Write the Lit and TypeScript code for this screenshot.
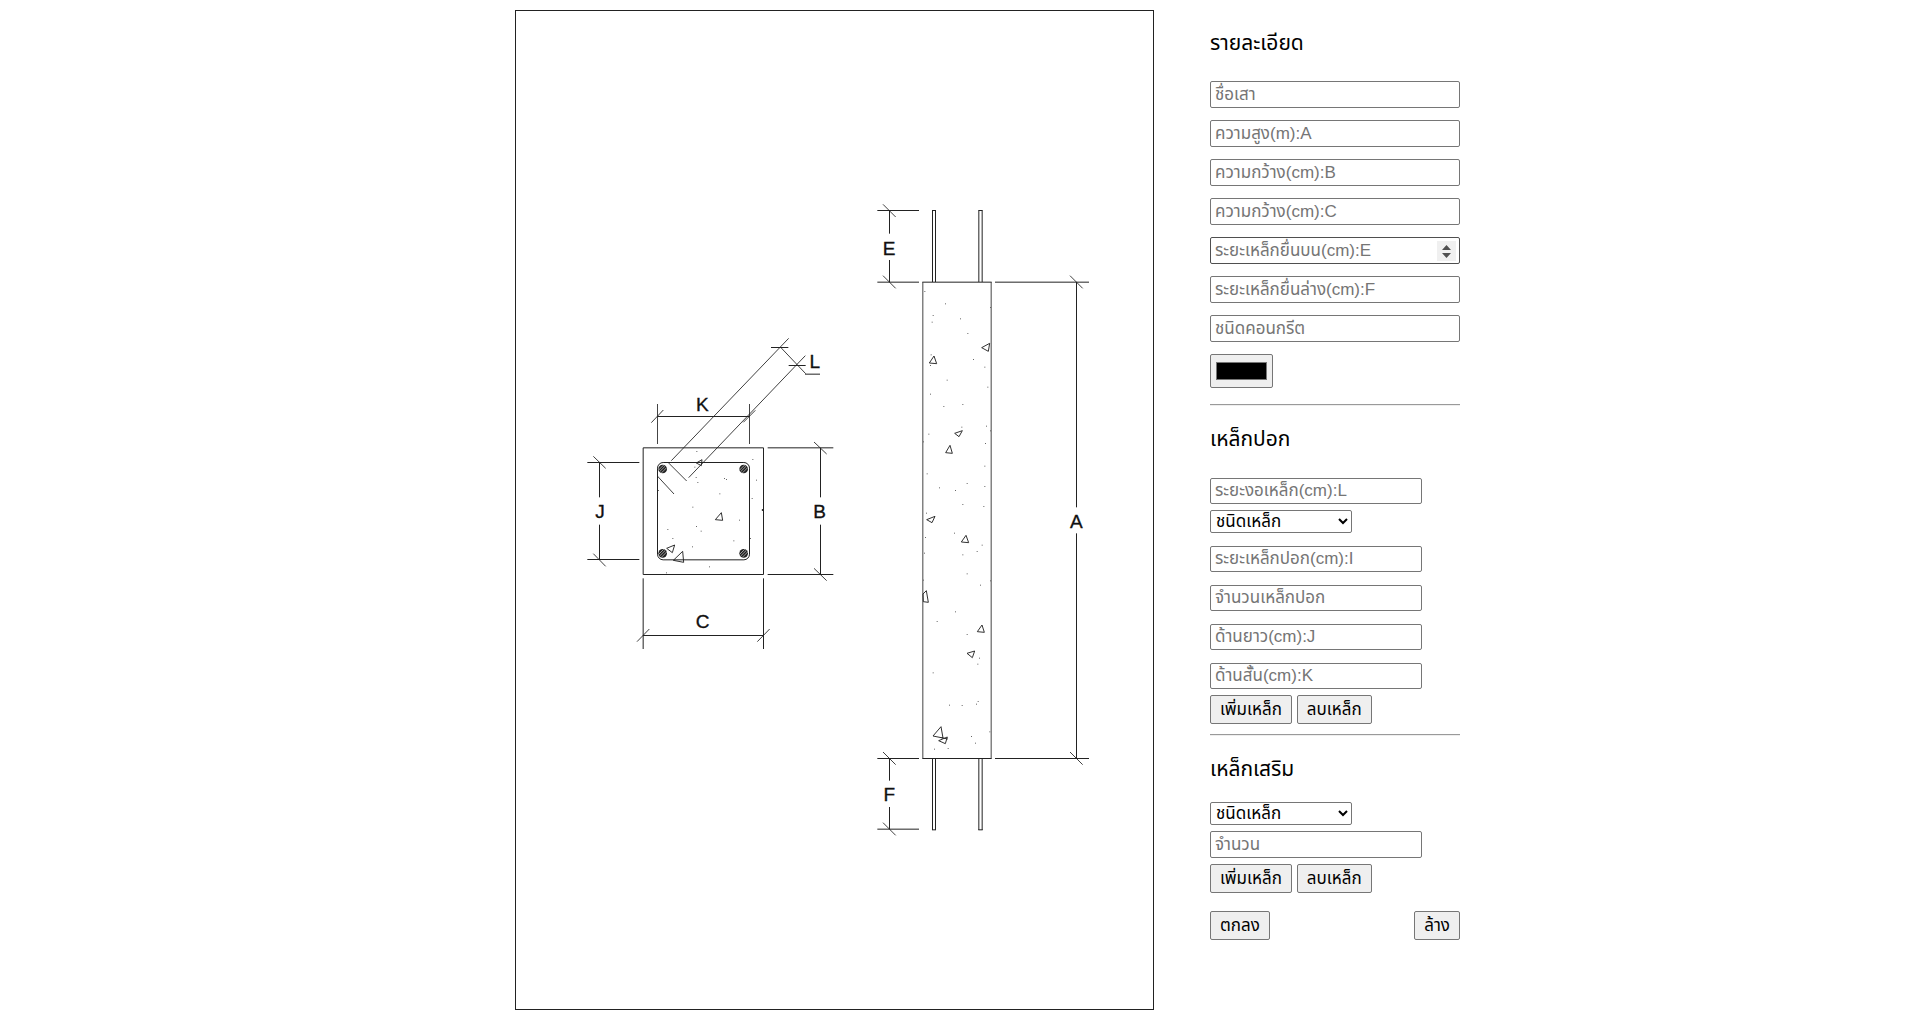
import { LitElement, html, svg, css } from "lit";
import { customElement } from "lit/decorators.js";

type Point = [number, number];

// The drawing uses three units for each pixel; every group has its own origin.
const sectionDots: Point[] = [
  [380, 394], [548, 418], [374, 441], [378, 472], [383, 487], [463, 475], [469, 478],
  [559, 480], [265, 511], [449, 521], [546, 535], [368, 561], [508, 600], [379, 619],
  [393, 633], [293, 628], [308, 655], [541, 655], [491, 662], [367, 680], [418, 740], [289, 758],
];
const upperDots: Point[] = [
  [194, 304], [256, 341], [219, 376], [216, 396], [301, 386], [323, 430], [391, 352],
  [213, 494], [211, 526], [340, 508], [374, 531], [261, 570], [383, 591], [211, 612], [251, 649], [308, 643],
];
const middleDots: Point[] = [
  [305, 51], [379, 48], [391, 62], [206, 72], [190, 95], [376, 100], [374, 168], [201, 191],
  [321, 220], [374, 229], [238, 233], [286, 241], [308, 283], [371, 289], [199, 309], [283, 369],
  [196, 382], [366, 405], [351, 424], [193, 429], [308, 434], [321, 491], [190, 510], [391, 512],
  [361, 525], [286, 605], [231, 634], [321, 673],
];
const lowerDots: Point[] = [
  [358, 84], [353, 102], [219, 128], [268, 225], [306, 226], [349, 222], [354, 214],
  [389, 305], [334, 319], [346, 339], [223, 357], [264, 355],
];
const bars: Point[] = [[278, 447], [521, 447], [278, 700], [521, 700]];

const dots = (points: Point[]) =>
  points.map(([x, y]) => svg`<rect class="dot" x=${x - 1} y=${y - 1} width="3" height="3"></rect>`);

const label = (x: number, y: number, text: string) =>
  svg`<text class="mark" x=${x} y=${y}>${text}</text>`;

@customElement("app-root")
export class AppRoot extends LitElement {
  static styles = css`
    :host {
      display: block;
      font-family: "Liberation Sans", "Noto Sans Thai", "Loma", sans-serif;
      font-size: 17px;
      color: #000;
      background: #fff;
    }
    .page {
      display: grid;
      grid-template-columns: minmax(0, 1fr) 250px;
      max-width: 1000px;
      margin: 0 auto;
      padding-top: 10px;
    }
    .figure {
      display: flex;
      justify-content: center;
      align-items: flex-start;
    }
    .drawing {
      display: block;
      width: 100%;
      max-width: 640px;
      height: auto;
    }
    .line { fill: none; stroke: #222; stroke-width: 3; }
    .soft { fill: none; stroke: #444; stroke-width: 3; }
    .thin { fill: none; stroke: #222; stroke-width: 2.6; }
    .chip { fill: none; stroke: #222; stroke-width: 2.8; }
    .dot { fill: #666; }
    .bar { fill: #222; }
    .hatch { fill: none; stroke: #ddd; stroke-width: 2; }
    .mark {
      font-family: "Liberation Sans", sans-serif;
      font-size: 57px;
      fill: #111;
      stroke: #111;
      stroke-width: 1;
      text-anchor: middle;
    }
    .form { display: flex; flex-direction: column; }
    .title {
      margin: 19px 0;
      font-size: 21px;
      line-height: 28px;
      font-weight: 400;
    }
    .stack { display: flex; flex-direction: column; align-items: flex-start; gap: 6px; }
    .fields { display: flex; flex-direction: column; align-items: flex-start; gap: 13px; padding-top: 6px; }
    .full { gap: 12px; padding-top: 5px; }
    .field {
      box-sizing: border-box;
      width: 212px;
      height: 27px;
      margin: 0;
      padding: 1px 3px 1px 4px;
      border: 1px solid #767676;
      border-radius: 2px;
      background: #fff;
      font: inherit;
    }
    .fields .field { height: 26px; }
    .full .field { width: 100%; height: 27px; }
    .field::placeholder { color: #757575; }
    .field::-webkit-inner-spin-button { opacity: 0; }
    .field.active { border-color: #4f4f4f; }
    .field.active::-webkit-inner-spin-button {
      appearance: none;
      opacity: 1;
      width: 19px;
      height: 20px;
      background: #f0f0f0 url("data:image/svg+xml,%3Csvg xmlns='http://www.w3.org/2000/svg' width='19' height='20'%3E%3Cpath d='M5 9L9.500 4L14 9ZM5 12L9.500 17L14 12Z' fill='%23505050'/%3E%3C/svg%3E") center no-repeat;
    }
    .color {
      box-sizing: border-box;
      width: 63px;
      height: 34px;
      margin: 0;
      padding: 3px;
      border: 1px solid #767676;
      border-radius: 2px;
      background: #efefef;
    }
    .choice {
      box-sizing: border-box;
      width: 142px;
      height: 23px;
      margin: 0;
      padding: 0 1px;
      border: 1px solid #767676;
      border-radius: 2px;
      background: #fff;
      color: #000;
      font: inherit;
    }
    .rule {
      width: 100%;
      box-sizing: border-box;
      margin: 16px 0 0;
      border: 0;
      border-top: 1px solid #9a9a9a;
      border-bottom: 1px solid #eee;
    }
    .near { margin-top: 10px; }
    .actions { display: flex; gap: 5px; }
    .ends { justify-content: space-between; margin-top: 18px; }
    .button {
      box-sizing: border-box;
      height: 29px;
      margin: 0;
      padding: 0 9px;
      border: 1px solid #767676;
      border-radius: 2px;
      background: #efefef;
      color: #000;
      font: inherit;
      white-space: nowrap;
    }
  `;

  private section() {
    return svg`<g transform="translate(165 930)">
      <path class="line" d="M219.5 383.5H580.5V763.5H219.5Z"></path>
      <rect class="line" x="262.5" y="427.5" width="276" height="292" rx="17"></rect>
      <path class="soft" d="M262.5 252V372M538.5 252V372"></path>
      <path class="line" d="M262 289.5H538M593 383.5H790M593 763.5H790M52 427.5H208M52 718.5H208M219 946.5H581"></path>
      <path class="line" d="M88.5 428V532M88.5 614V719M751.5 384V532M751.5 614V764M219.5 775V987M580.5 775V987"></path>
      <path class="thin" d="M244 308L280 270M520 307L556 271M70 409L107 445M70 701L107 739M732 366L770 402M732 745L770 782M201 965L238 927M562 965L599 927"></path>
      <path class="thin" d="M304 422L656 55M356 473L706 107M632 82L707 161M296 429L350 483M262 468L312 522"></path>
      <path class="line" d="M603 82.5H655M656 136.5H707M705 162.5H750"></path>
      <path class="chip" d="M379 429L396 419L394 437ZM436 599L454 578L458 601ZM290 685L314 675L307 698ZM310 721L338 694L341 727Z"></path>
      ${bars.map(([x, y]) => svg`<g transform="translate(${x} ${y})">
        <circle class="bar" r="13"></circle>
        <path class="hatch" d="M-12 3L3 -12M-9 8L8 -9M-4 12L12 -4"></path>
      </g>`)}
      ${dots(sectionDots)}
      <circle class="bar" cx="578" cy="570" r="3"></circle>
      ${label(397, 272, "K")}${label(734, 143, "L")}${label(90, 595, "J")}
      ${label(749, 595, "B")}${label(398, 925, "C")}
    </g>`;
  }

  private column() {
    return svg`<g transform="translate(1035 540)">
        <path class="line" d="M52 61.5H177M52 276.5H177M187 276.5H395M405 276.5H687M88.5 62V131M88.5 210V276M216 61.5H228M355 61.5H368"></path>
        <path class="line" d="M217.5 62V276M226.5 62V276M356.5 62V276M366.5 62V276"></path>
        <path class="soft" d="M188.5 276V1705M393.5 276V1705"></path>
        <path class="line" d="M649.5 276V952M649.5 1030V1705"></path>
        <path class="thin" d="M69 43L107 81M69 257L107 295M630 257L668 295"></path>
        <path class="chip" d="M208 519L222 498L230 521ZM365 473L389 460L385 484Z"></path>
        ${dots(upperDots)}
        ${label(87, 194, "E")}
      </g>
      <g transform="translate(1035 1200)">
        <path class="chip" d="M284 70L307 62L297 80ZM257 128L270 106L277 130ZM200 329L225 319L216 338ZM304 396L318 376L326 398ZM189 552L199 542L205 577L190 575ZM352 665L366 645L373 667Z"></path>
        ${dots(middleDots)}
        ${label(649, 354, "A")}
      </g>
      <g transform="translate(1035 1860)">
        <path class="line" d="M52 385.5H177M52 597.5H177M187 385.5H395M405 385.5H687M88.5 386V452M88.5 531V597M216 599.5H228M355 599.5H368"></path>
        <path class="line" d="M217.5 386V600M226.5 386V600M356.5 386V600M366.5 386V600"></path>
        <path class="thin" d="M69 366L107 404M69 578L107 616M630 366L668 404"></path>
        <path class="chip" d="M321 70L344 63L337 83ZM219 318L243 290L249 324ZM236 332L262 321L256 341ZM244 323L263 327"></path>
        ${dots(lowerDots)}
        ${label(88, 512, "F")}
      </g>`;
  }

  private field(text: string, type = "number", active = false) {
    return html`<input class="field ${active ? "active" : ""}" type=${type} placeholder=${text} aria-label=${text} />`;
  }

  private choice() {
    return html`<select class="choice" aria-label="ชนิดเหล็ก"><option>ชนิดเหล็ก</option></select>`;
  }

  private actions() {
    return html`<div class="actions">
      <button class="button" type="button">เพิ่มเหล็ก</button>
      <button class="button" type="button">ลบเหล็ก</button>
    </div>`;
  }

  render() {
    return html`<main class="page">
      <div class="figure">
        <svg class="drawing" viewBox="0 0 1920 3000" role="img">
          <rect class="line" x="1.5" y="1.5" width="1914" height="2997"></rect>
          ${this.section()}${this.column()}
        </svg>
      </div>
      <form class="form">
        <h2 class="title">รายละเอียด</h2>
        <div class="fields full">
          ${this.field("ชื่อเสา", "text")}
          ${this.field("ความสูง(m):A")}
          ${this.field("ความกว้าง(cm):B")}
          ${this.field("ความกว้าง(cm):C")}
          ${this.field("ระยะเหล็กยื่นบน(cm):E", "number", true)}
          ${this.field("ระยะเหล็กยื่นล่าง(cm):F")}
          ${this.field("ชนิดคอนกรีต", "text")}
          <input class="color" type="color" value="#000000" aria-label="color" />
        </div>
        <hr class="rule" />
        <h2 class="title">เหล็กปอก</h2>
        <div class="stack">
          <div class="fields">
            <div class="stack">
              ${this.field("ระยะงอเหล็ก(cm):L")}
              ${this.choice()}
            </div>
            ${this.field("ระยะเหล็กปอก(cm):I")}
            ${this.field("จำนวนเหล็กปอก")}
            ${this.field("ด้านยาว(cm):J")}
            ${this.field("ด้านสั้น(cm):K")}
          </div>
          ${this.actions()}
        </div>
        <hr class="rule near" />
        <h2 class="title">เหล็กเสริม</h2>
        <div class="stack">
          ${this.choice()}
          ${this.field("จำนวน")}
          ${this.actions()}
        </div>
        <div class="actions ends">
          <button class="button" type="submit">ตกลง</button>
          <button class="button" type="reset">ล้าง</button>
        </div>
      </form>
    </main>`;
  }
}
